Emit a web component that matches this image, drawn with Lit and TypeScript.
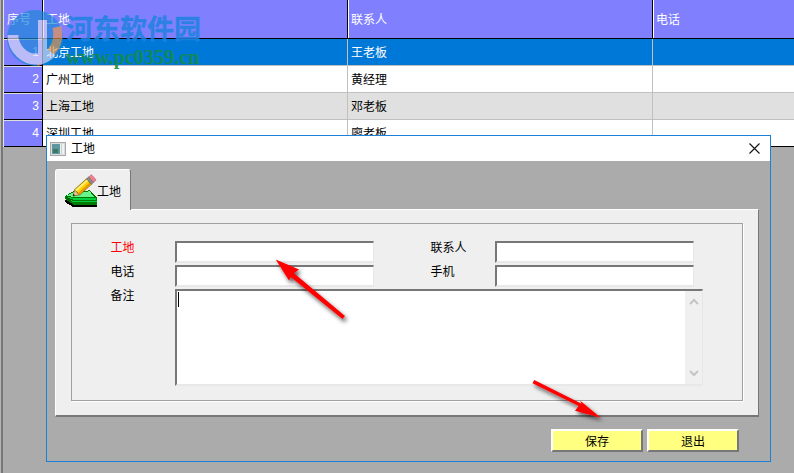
import { LitElement, html, css, svg } from "lit";
import { customElement } from "lit/decorators.js";

const ROWS = [
  { n: "1", site: "北京工地", who: "王老板", cls: "sel" },
  { n: "2", site: "广州工地", who: "黄经理", cls: "" },
  { n: "3", site: "上海工地", who: "邓老板", cls: "alt" },
  { n: "4", site: "深圳工地", who: "廖老板", cls: "" },
];

const pencilIcon = svg`<svg class="tabicon" width="34" height="34" viewBox="0 0 34 34">
  <g shape-rendering="crispEdges">
    <path d="M0 26l2 0 7 5h23v2H8l-8-5z" fill="#000"/>
    <path d="M0 22l9-5h12l3-1 3 2 3 4 2 1v8H9l-9-6z" fill="#007a00"/>
    <path d="M1 22l8-4h12l3-1 2 2 3 4 H10z" fill="#66f58c"/>
    <path d="M1 23l9 1h21v2H10l-9-2zM2 25l7 2h23v1H9l-7-2z" fill="#00d040"/>
    <path d="M1 23h2v1h-2zM3 24h2v1h-2zM5 25h2v1h-2zM2 25h2v1h-2zM4 26h2v1h-2z" fill="#005a00"/>
  </g>
  <g transform="translate(8 22) rotate(-42)">
    <path d="M0 0L5.5 -3.5V3.5z" fill="#f2c090" stroke="#5a3c00" stroke-width=".5"/>
    <path d="M0 0l1.8-1.1v2.2z" fill="#000"/>
    <rect x="5.5" y="-3.7" width="16" height="7.4" fill="#ffd000" stroke="#5a3c00" stroke-width=".6"/>
    <rect x="5.5" y="-3" width="16" height="2" fill="#fff07a"/>
    <rect x="5.5" y="1.2" width="16" height="2" fill="#e89600"/>
    <rect x="21.5" y="-3.7" width="3" height="7.4" fill="#8c8c8c" stroke="#444" stroke-width=".4"/>
    <rect x="24.5" y="-3.7" width="3.5" height="7.4" rx="1" fill="#f0808e" stroke="#a04050" stroke-width=".4"/>
  </g>
</svg>`;

const titleIcon = svg`<svg class="ticon" width="16" height="14" viewBox="0 0 16 14" shape-rendering="crispEdges">
  <rect x=".5" y=".5" width="15" height="13" fill="#dcdcdc" stroke="#a8a8a8"/>
  <rect x="2" y="2" width="8" height="10" fill="#5f96a0"/>
  <rect x="3" y="7" width="5" height="4" fill="#3a7a62"/>
  <rect x="10" y="2" width="4" height="10" fill="#eef2f0"/>
  <rect x="11" y="2" width="1" height="10" fill="#c4d4cc"/>
</svg>`;

const closeIcon = svg`<svg class="close" width="11" height="11" viewBox="0 0 11 11">
  <path d="M.5.5l10 10M10.5.5l-10 10" stroke="#111" stroke-width="1.1" fill="none"/>
</svg>`;

const logo = svg`<svg class="wm-logo" width="60" height="58" viewBox="0 0 60 58">
  <circle cx="30" cy="28" r="28" fill="#1c86d8"/>
  <path d="M52 17c3 14-2 27-21 35" fill="none" stroke="#e8964a" stroke-width="9"/>
  <path d="M8 25c0 14 12 25 24 24 6 0 11-3 14-7" fill="none" stroke="#d6d8f4" stroke-width="11"/>
  <path d="M33 10h9v34h-9z" fill="#d6d8f4"/>
  <path d="M13 27l15-11h3v22h-8V26l-7 5z" fill="#1c86d8"/>
</svg>`;

const arrows = svg`<svg class="arrows" width="794" height="473" viewBox="0 0 794 473">
  <defs><filter id="sh" x="-30%" y="-30%" width="170%" height="170%">
    <feDropShadow dx="2" dy="3" stdDeviation="2" flood-color="#000" flood-opacity=".65"/>
  </filter></defs>
  <g filter="url(#sh)" fill="#f00">
    <path d="M275.7 259.5L299 269.5 294 273.2 345 316 342.5 319 290.8 277 289 280.5z"/>
    <path d="M600.8 417.8L575 410.7 578.6 406 532.5 383.2 534.2 380 581.6 403.8 580 400.5z"/>
  </g>
</svg>`;

@customElement("app-root")
export class AppRoot extends LitElement {
  static styles = css`
    :host {
      display: block;
      position: relative;
      width: 794px;
      height: 473px;
      overflow: hidden;
      background: linear-gradient(90deg, #b4b4b4 1px, #777 1px, #777 3px, #ababab 3px);
      font-family: "Noto Sans CJK SC", "Liberation Sans", sans-serif;
      font-size: 12px;
      color: #000;
    }

    .grid { display: grid; grid-template-columns: 4px 39px 305px 305px 141px; grid-template-rows: 39px repeat(4, 27px); width: 794px; }
    .gap { border-right: 1px solid #e4e4e4; box-sizing: border-box; }
    .cell { box-sizing: border-box; display: flex; align-items: center; padding: 0 0 2px 3px; white-space: nowrap; overflow: hidden; border-bottom: 1px solid #c0c0c0; border-right: 1px solid #c0c0c0; }
    .hd { background: #8080ff; color: #fff; border-bottom: 1px solid #000; border-right: 1px solid #000; padding-bottom: 1px; }
    .hd.next { box-shadow: inset 1px 0 0 #fff; }
    .hd.last { border-right: none; }
    .idx { background: #8080ff; color: #fff; justify-content: flex-end; padding: 0 3px 1px 0; border-bottom: 1px solid #000; border-right: 1px solid #000; box-shadow: inset 0 1px 0 #ddd; font-family: "Liberation Sans", sans-serif; }
    .sel { background: #0078d7; color: #fff; }
    .alt { background: #e0e0e0; }
    .plain { background: #fff; }
    .cell.last { border-right: none; }
    .tail { border-bottom-color: #000; }

    .wm { position: absolute; left: 5px; top: 10px; display: flex; gap: 1px; pointer-events: none; }
    .wm-logo { display: block; opacity: .68; }
    .wm-text { display: flex; flex-direction: column; margin-top: 2px; }
    .wm-cn { font: 700 27px/31px "Noto Sans CJK SC", serif; color: rgba(30, 130, 225, .85); -webkit-text-stroke: .4px rgba(30, 130, 225, .85); white-space: nowrap; }
    .wm-url { font: 700 20.2px/20px "Liberation Serif", serif; color: rgba(20, 140, 70, .88); white-space: nowrap; margin-top: 4px; }

    .dialog { position: absolute; left: 46px; top: 135px; width: 725px; height: 327px; box-sizing: border-box; border: 1px solid #1b80d6; background: #ababab; display: flex; flex-direction: column; }
    .title { height: 25px; background: #fff; display: flex; align-items: center; padding: 0 10px 0 3px; flex: none; }
    .ticon { display: block; margin-right: 5px; margin-top: 1px; }
    .title span { flex: 1; margin-top: -2px; }
    .close { display: block; }
    .body { padding: 8px 11px 0 8px; display: flex; flex-direction: column; }
    .tab { width: 76px; height: 41px; box-sizing: border-box; background: #efefef; border-top: 1px solid #fff; border-left: 1px solid #fff; border-right: 1px solid #777; border-top-left-radius: 3px; border-top-right-radius: 3px; display: flex; align-items: center; padding-left: 9px; margin-bottom: -1px; position: relative; z-index: 1; }
    .tabicon { display: block; flex: none; margin-right: -2px; margin-top: 1px; }
    .panel { height: 208px; box-sizing: border-box; background: #efefef; border-top: 1px solid #fff; border-left: 1px solid #fff; border-right: 1px solid #777; border-bottom: 2px solid #777; padding: 13px 15px; }
    .group { width: 672px; height: 178px; box-sizing: border-box; border: 1px solid #a0a0a0; box-shadow: 1px 1px 0 #fff; padding: 17px 0 0 39px; display: grid; grid-template-columns: 64px 199px 57px 64px 199px 9px; grid-template-rows: 22px 22px 97px; row-gap: 2px; }
    .lab { line-height: 13px; margin: -1px 0 0 -0.5px; }
    .lab.red { color: #f00; }
    .input { box-sizing: border-box; background: #fff; border-top: 2px solid #777; border-left: 2px solid #777; border-right: 1px solid #e8e8e8; border-bottom: 2px solid #e8e8e8; }
    .memo { grid-column: 2 / 7; display: flex; }
    .caret { width: 1px; height: 15px; background: #000; margin: 1px 0 0 1px; }
    .sb { margin-left: auto; width: 17px; background: #f0f0f0; display: flex; flex-direction: column; justify-content: space-between; align-items: center; padding: 7px 0; box-sizing: border-box; }
    .sb svg { display: block; }
    .btns { display: flex; justify-content: flex-end; gap: 4px; padding: 12px 20px 0 0; }
    .btn { width: 92px; height: 23px; box-sizing: border-box; background: #ffff80; border-top: 2px solid #fff; border-left: 2px solid #fff; border-right: 2px solid #777; border-bottom: 2px solid #777; display: flex; align-items: center; justify-content: center; }
    .arrows { position: absolute; left: 0; top: 0; pointer-events: none; }
  `;

  render() {
    return html`
      <div class="grid">
        <div class="gap"></div>
        <div class="cell hd"><span>序号</span></div>
        <div class="cell hd next"><span>工地</span></div>
        <div class="cell hd next"><span>联系人</span></div>
        <div class="cell hd last next"><span>电话</span></div>
        ${ROWS.map((r, i) => {
          const c = `${r.cls || "plain"} ${i === 3 ? "tail" : ""}`;
          return html`
            <div class="gap"></div>
            <div class="cell idx">${r.n}</div>
            <div class="cell ${c}"><span>${r.site}</span></div>
            <div class="cell ${c}"><span>${r.who}</span></div>
            <div class="cell last ${c}"></div>`;
        })}
      </div>
      <div class="wm">
        ${logo}
        <div class="wm-text">
          <div class="wm-cn">河东软件园</div>
          <div class="wm-url">www.pc0359.cn</div>
        </div>
      </div>
      <div class="dialog">
        <div class="title">${titleIcon}<span>工地</span>${closeIcon}</div>
        <div class="body">
          <div class="tab">${pencilIcon}<span>工地</span></div>
          <div class="panel">
            <div class="group">
              <div class="lab red">工地</div>
              <div class="input"></div>
              <div></div>
              <div class="lab">联系人</div>
              <div class="input"></div>
              <div></div>
              <div class="lab">电话</div>
              <div class="input"></div>
              <div></div>
              <div class="lab">手机</div>
              <div class="input"></div>
              <div></div>
              <div class="lab">备注</div>
              <div class="input memo">
                <div class="caret"></div>
                <div class="sb">
                  <svg width="10" height="7" viewBox="0 0 10 7"><path d="M1 6l4-4 4 4" fill="none" stroke="#c4c4c4" stroke-width="2"/></svg>
                  <svg width="10" height="7" viewBox="0 0 10 7"><path d="M1 1l4 4 4-4" fill="none" stroke="#c4c4c4" stroke-width="2"/></svg>
                </div>
              </div>
            </div>
          </div>
          <div class="btns">
            <div class="btn">保存</div>
            <div class="btn">退出</div>
          </div>
        </div>
      </div>
      ${arrows}
    `;
  }
}
